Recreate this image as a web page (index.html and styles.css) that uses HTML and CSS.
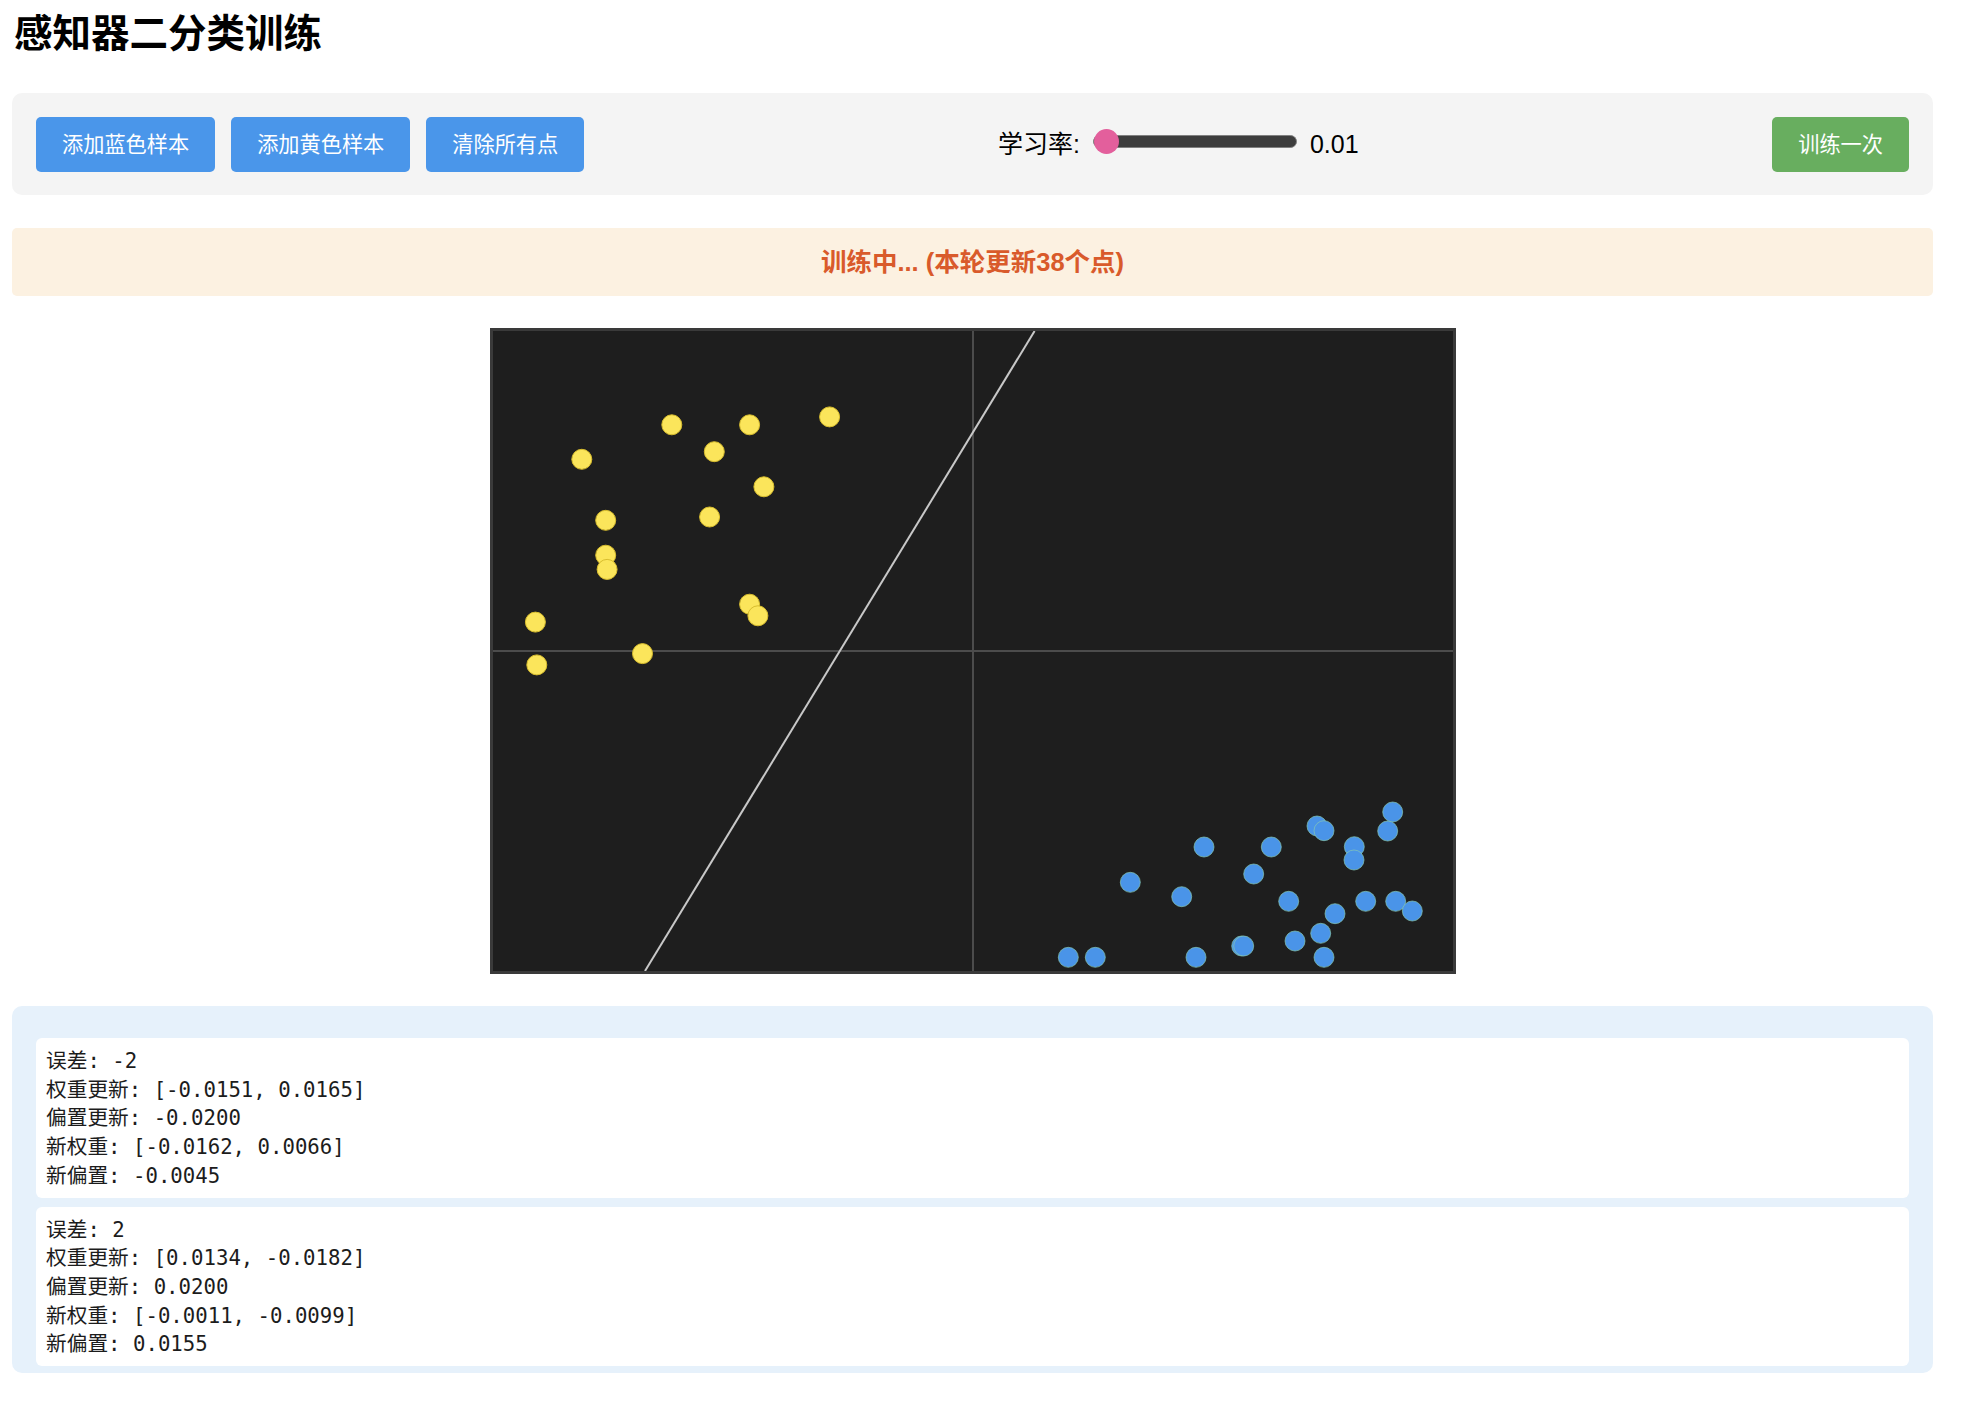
FILE: index.html
```html
<!DOCTYPE html>
<html lang="zh-CN">
<head>
<meta charset="utf-8">
<title>感知器二分类训练</title>
<link rel="stylesheet" href="styles.css">
</head>
<body>
<div class="page">
  <h1 class="title">感知器二分类训练</h1>

  <div class="toolbar">
    <div class="btn-group">
      <button class="btn btn-blue">添加蓝色样本</button>
      <button class="btn btn-blue">添加黄色样本</button>
      <button class="btn btn-blue">清除所有点</button>
    </div>
    <div class="rate">
      <span class="rate-label">学习率:</span>
      <input class="rate-slider" type="range" min="0.01" max="1" step="0.01" value="0.01">
      <span class="rate-value">0.01</span>
    </div>
    <button class="btn btn-green">训练一次</button>
  </div>

  <div class="status">训练中... (本轮更新38个点)</div>

  <div class="plot-wrap">
    <div class="plot-frame">
      <svg class="plot" viewBox="0 0 960 640" width="960" height="640">
        <line class="axis" x1="480" y1="0" x2="480" y2="640"/>
        <line class="axis" x1="0" y1="320" x2="960" y2="320"/>
        <line class="boundary" x1="541.6" y1="0" x2="152" y2="640"/>
        <g class="yellow">
          <circle cx="178.8" cy="93.8" r="10"/>
          <circle cx="256.6" cy="93.8" r="10"/>
          <circle cx="336.6" cy="85.9" r="10"/>
          <circle cx="88.8" cy="128.3" r="10"/>
          <circle cx="221.3" cy="120.7" r="10"/>
          <circle cx="270.9" cy="155.8" r="10"/>
          <circle cx="112.7" cy="189.3" r="10"/>
          <circle cx="216.6" cy="186" r="10"/>
          <circle cx="112.7" cy="224.2" r="10"/>
          <circle cx="114.1" cy="238.4" r="10"/>
          <circle cx="256.6" cy="273.2" r="10"/>
          <circle cx="264.9" cy="284.8" r="10"/>
          <circle cx="42.4" cy="291.1" r="10"/>
          <circle cx="149.5" cy="322.6" r="10"/>
          <circle cx="43.8" cy="333.9" r="10"/>
        </g>
        <g class="blue">
          <circle cx="899.7" cy="481" r="10"/>
          <circle cx="824" cy="495" r="10"/>
          <circle cx="831" cy="499.7" r="10"/>
          <circle cx="894.7" cy="500" r="10"/>
          <circle cx="711" cy="516" r="10"/>
          <circle cx="778.3" cy="516" r="10"/>
          <circle cx="861.3" cy="515.7" r="10"/>
          <circle cx="861" cy="529" r="10"/>
          <circle cx="760.7" cy="543" r="10"/>
          <circle cx="637.3" cy="551.3" r="10"/>
          <circle cx="688.7" cy="565.7" r="10"/>
          <circle cx="795.7" cy="570.3" r="10"/>
          <circle cx="872.7" cy="570.3" r="10"/>
          <circle cx="902.7" cy="570.3" r="10"/>
          <circle cx="919.3" cy="580" r="10"/>
          <circle cx="842" cy="582.7" r="10"/>
          <circle cx="827.7" cy="602.3" r="10"/>
          <circle cx="802" cy="610" r="10"/>
          <circle cx="748.7" cy="615" r="10"/>
          <circle cx="750.7" cy="615" r="10"/>
          <circle cx="575.3" cy="626.3" r="10"/>
          <circle cx="602.3" cy="626.3" r="10"/>
          <circle cx="703" cy="626.3" r="10"/>
          <circle cx="831" cy="626.3" r="10"/>
        </g>
      </svg>
    </div>
  </div>

  <div class="log">
    <div class="log-entry">误差: -2
权重更新: [-0.0151, 0.0165]
偏置更新: -0.0200
新权重: [-0.0162, 0.0066]
新偏置: -0.0045</div>
    <div class="log-entry">误差: 2
权重更新: [0.0134, -0.0182]
偏置更新: 0.0200
新权重: [-0.0011, -0.0099]
新偏置: 0.0155</div>
  </div>
</div>
</body>
</html>
```
FILE: styles.css
```css
html, body {
  margin: 0;
  padding: 0;
  background: #ffffff;
}

body {
  font-family: "Liberation Sans", "Noto Sans CJK SC", sans-serif;
  color: #000;
}

.page {
  margin: 0 31px 0 12px;
}

.title {
  margin: 11px 0 36px 2px;
  font-size: 38.5px;
  line-height: 46px;
  font-weight: 700;
}

.toolbar {
  display: flex;
  align-items: center;
  justify-content: space-between;
  padding: 23.5px 24px;
  background: #f4f4f4;
  border-radius: 10px;
  margin-bottom: 33px;
}

.btn-group {
  display: flex;
  gap: 16px;
}

.btn {
  font-family: "Liberation Sans", "Noto Sans CJK SC", sans-serif;
  height: 55px;
  padding: 0 26px;
  border: none;
  border-radius: 5px;
  color: #ffffff;
  font-size: 21.2px;
  line-height: 55px;
  cursor: pointer;
}

.btn-blue {
  background: #4a96ea;
}

.btn-green {
  background: #68ae5f;
}

.rate {
  display: flex;
  align-items: center;
  gap: 13px;
}

.rate-label,
.rate-value {
  font-size: 25px;
  line-height: 30px;
  color: #000;
}

.rate-slider {
  -webkit-appearance: none;
  appearance: none;
  width: 204px;
  height: 25px;
  margin: 0 0 6px;
  background: transparent;
}

.rate-slider::-webkit-slider-runnable-track {
  height: 13px;
  background: #3d3d3d;
  border: 1px solid #808080;
  border-radius: 7px;
  box-sizing: border-box;
}

.rate-slider::-webkit-slider-thumb {
  -webkit-appearance: none;
  appearance: none;
  width: 25px;
  height: 25px;
  border-radius: 50%;
  background: #e35f9c;
  border: none;
  margin-top: -7px;
}

.status {
  height: 68px;
  line-height: 68px;
  text-align: center;
  background: #fcf1e1;
  color: #d95a2b;
  font-size: 25.5px;
  font-weight: 700;
  border-radius: 5px;
  margin-bottom: 32px;
}

.plot-wrap {
  display: flex;
  justify-content: center;
  margin-bottom: 32px;
}

.plot-frame {
  border: 3px solid #3a3a3a;
  background: #1e1e1e;
  width: 960px;
  height: 640px;
}

.plot {
  display: block;
}

.axis {
  stroke: #4c4c4c;
  stroke-width: 2;
}

.boundary {
  stroke: #c8c8c8;
  stroke-width: 2;
}

.yellow circle {
  fill: #fbe55b;
  stroke: #d8bd2e;
  stroke-width: 1;
}

.blue circle {
  fill: #4a94e8;
  stroke: #86c8b4;
  stroke-width: 1;
  stroke-opacity: 0.7;
}

.log {
  height: 367px;
  box-sizing: border-box;
  padding: 32px 24px 0;
  background: #e6f1fb;
  border-radius: 10px;
  overflow: hidden;
  display: flex;
  flex-direction: column;
  gap: 9px;
}

.log-entry {
  flex: none;
  background: #ffffff;
  border-radius: 6px;
  padding: 9px 8px 7px 10px;
  font-family: "DejaVu Sans Mono", "Noto Sans CJK SC", monospace;
  font-size: 20.7px;
  line-height: 28.7px;
  white-space: pre;
  color: #1c1c1c;
}
```
